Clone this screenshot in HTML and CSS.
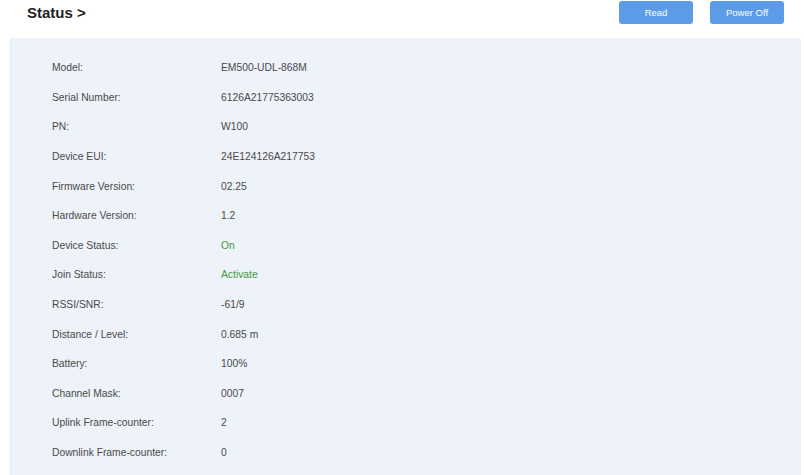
FILE: index.html
```html
<!DOCTYPE html>
<html lang="en">
<head>
    <meta charset="UTF-8">
    <meta name="viewport" content="width=device-width, initial-scale=1.0">
    <title>Status</title>
    <link rel="stylesheet" href="styles.css">
</head>
<body>
    <!-- Cabecera -->
    <div class="header">
        <h2 class="title">Status &gt;</h2>
        <div class="actions">
            <button class="btn">Read</button>
            <button class="btn">Power Off</button>
        </div>
    </div>

    <!-- Panel de estado -->
    <div class="panel">
        <div class="row"><span class="label">Model:</span><span class="value">EM500-UDL-868M</span></div>
        <div class="row"><span class="label">Serial Number:</span><span class="value">6126A21775363003</span></div>
        <div class="row"><span class="label">PN:</span><span class="value">W100</span></div>
        <div class="row"><span class="label">Device EUI:</span><span class="value">24E124126A217753</span></div>
        <div class="row"><span class="label">Firmware Version:</span><span class="value">02.25</span></div>
        <div class="row"><span class="label">Hardware Version:</span><span class="value">1.2</span></div>
        <div class="row"><span class="label">Device Status:</span><span class="value ok">On</span></div>
        <div class="row"><span class="label">Join Status:</span><span class="value ok">Activate</span></div>
        <div class="row"><span class="label">RSSI/SNR:</span><span class="value">-61/9</span></div>
        <div class="row"><span class="label">Distance / Level:</span><span class="value">0.685 m</span></div>
        <div class="row"><span class="label">Battery:</span><span class="value">100%</span></div>
        <div class="row"><span class="label">Channel Mask:</span><span class="value">0007</span></div>
        <div class="row"><span class="label">Uplink Frame-counter:</span><span class="value">2</span></div>
        <div class="row"><span class="label">Downlink Frame-counter:</span><span class="value">0</span></div>
    </div>
</body>
</html>
```

FILE: styles.css
```css
body {
    margin: 0;
    background-color: #fff;
    font-family: "Liberation Sans", Arial, sans-serif;
    color: #444;
}

/* Cabecera */
.header {
    display: flex;
    justify-content: space-between;
    align-items: flex-start;
    height: 38px;
}

.title {
    margin: 0;
    padding: 5px 0 0 27px;
    font-size: 15px;
    font-weight: bold;
    color: #222;
    line-height: 16px;
}

.actions {
    display: flex;
    gap: 17px;
    padding: 1px 20px 0 0;
}

.btn {
    width: 74px;
    height: 23px;
    border: none;
    border-radius: 3px;
    background-color: #5b9be8;
    color: #fff;
    font-family: "Liberation Sans", Arial, sans-serif;
    font-size: 9.5px;
    padding: 0;
    cursor: pointer;
}

/* Panel */
.panel {
    margin: 0 3px 0 10px;
    padding: 15px 0 8px 41px;
    background-color: #eef2f9;
    border-left: 1px solid #e3e8f0;
}

.row {
    display: flex;
    align-items: center;
    height: 29.6px;
    font-size: 10.3px;
}

.label {
    width: 169px;
    color: #4a4a4a;
}

.value {
    color: #4a4a4a;
}

.ok {
    color: #3f9b3f;
}
```
